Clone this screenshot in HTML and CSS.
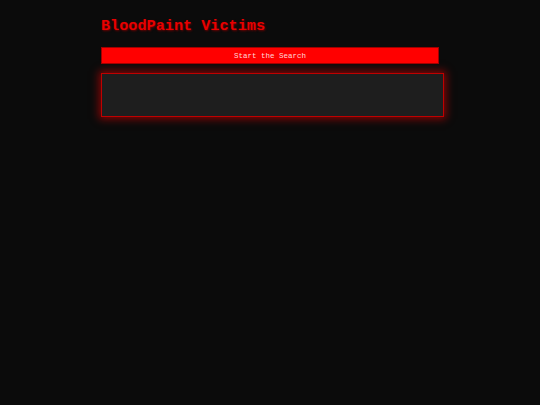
FILE: index.html
```html
<!DOCTYPE html>
<html>
<head>
<meta charset="utf-8">
<link rel="stylesheet" href="styles.css">
</head>
<body>
<div class="wrap">
  <h1 class="title">BloodPaint Victims</h1>
  <button class="search">Start the Search</button>
  <div class="results"></div>
</div>
</body>
</html>
```
FILE: styles.css
```css
html, body {
  margin: 0;
  padding: 0;
  background: #0b0b0b;
  height: 100%;
}
body {
  font-family: "Liberation Mono", "DejaVu Sans Mono", monospace;
}
.wrap {
  width: 338px;
  margin: 0 auto;
  padding-top: 17px;
  display: flex;
  flex-direction: column;
  align-items: flex-start;
}
.title {
  margin: 0;
  font-size: 15.2px;
  line-height: 18px;
  font-weight: bold;
  color: #e80000;
  text-shadow: 1px 1px 2px #700000;
}
.search {
  margin-top: 12px;
  width: 338px;
  height: 17px;
  background: #ff0000;
  border: 1px solid #a00000;
  color: #ffd8d8;
  font-family: "Liberation Mono", monospace;
  font-size: 7.5px;
  font-weight: normal;
  padding: 0;
  box-sizing: border-box;
}
.results {
  margin-top: 9px;
  width: 343px;
  height: 44px;
  box-sizing: border-box;
  background: #1e1e1e;
  border: 1px solid #c00000;
  box-shadow: 0 0 8px 2px rgba(255, 0, 0, 0.5);
}
```
